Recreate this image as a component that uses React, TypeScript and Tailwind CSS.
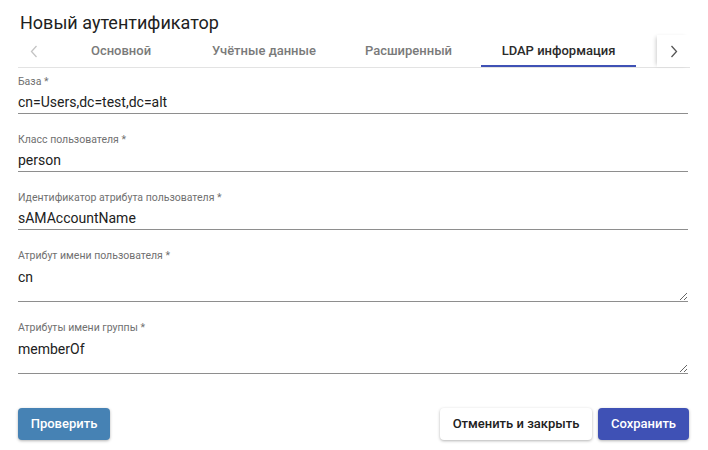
const tabs = [
  { label: "Основной", w: "w-[142px]" },
  { label: "Учётные данные", w: "w-[144px]" },
  { label: "Расширенный", w: "w-[145px]" },
  { label: "LDAP информация", w: "w-[155px]", active: true },
];

function Field({ label, value }: { label: string; value: string }) {
  return (
    <div className="mr-[2px] flex flex-col">
      <span className="text-[10.5px] leading-[14px] text-[#707070]">{label}</span>
      <div className="mt-[3px] border-b border-[#8e8e8e] pb-[1px] text-[14px] leading-[20px] text-[#212121]">
        {value}
      </div>
    </div>
  );
}

function AreaField({ label, value }: { label: string; value: string }) {
  return (
    <div className="mr-[2px] flex flex-col">
      <span className="text-[10.5px] leading-[14px] text-[#707070]">{label}</span>
      <textarea
        readOnly
        defaultValue={value}
        rows={1}
        className="mt-[4px] block h-[35px] w-full border-b border-[#8e8e8e] p-0 text-[14px] leading-[20px] text-[#212121] outline-none"
      />
    </div>
  );
}

export default function App() {
  return (
    <div className="h-[450px] w-[708px] bg-white px-[18px] font-['Roboto','Liberation_Sans',sans-serif]">
      {/* Title */}
      <h1 className="pt-[12px] pl-[2px] text-[18px] leading-[22px] text-[#212121]">
        Новый аутентификатор
      </h1>

      {/* Tabs */}
      <div className="mt-[1px] flex h-[33px] border-b border-[#e3e3e3]">
        <div className="flex w-[32px] items-center justify-center">
          <svg width="8" height="13" viewBox="0 0 8 13">
            <polyline points="6.5,1 1.5,6.5 6.5,12" fill="none" stroke="#c4c4c4" strokeWidth="1.3" />
          </svg>
        </div>
        {tabs.map((t) => (
          <div
            key={t.label}
            className={`relative flex items-center justify-center text-[13px] font-medium ${t.w} ${
              t.active ? "text-[#2b2b2b]" : "text-[#7a7a7a]"
            }`}
          >
            {t.label}
            {t.active && <div className="absolute right-0 bottom-0 left-0 h-[2px] bg-[#3f51b5]" />}
          </div>
        ))}
        <div className="flex-1" />
        <div className="flex w-[33px] items-center justify-center bg-white shadow-[-3px_0_4px_-2px_rgba(0,0,0,0.2)]">
          <svg width="8" height="13" viewBox="0 0 8 13">
            <polyline points="1.5,1 6.5,6.5 1.5,12" fill="none" stroke="#555" strokeWidth="1.3" />
          </svg>
        </div>
      </div>

      {/* Fields */}
      <div className="mt-[7px] flex flex-col gap-[19px]">
        <Field label="База *" value="cn=Users,dc=test,dc=alt" />
        <Field label="Класс пользователя *" value="person" />
        <Field label="Идентификатор атрибута пользователя *" value="sAMAccountName" />
        <AreaField label="Атрибут имени пользователя *" value="cn" />
        <AreaField label="Атрибуты имени группы *" value="memberOf" />
      </div>

      {/* Actions */}
      <div className="mt-[34px] mr-[1px] flex items-center">
        <button className="h-[32px] w-[92px] rounded-[4px] bg-[#4682b4] text-[13px] font-medium text-white shadow-[0_1px_3px_rgba(0,0,0,0.3)]">
          Проверить
        </button>
        <div className="flex-1" />
        <button className="h-[32px] w-[152px] rounded-[4px] bg-white text-[13px] font-medium text-[#212121] shadow-[0_1px_3px_rgba(0,0,0,0.3)]">
          Отменить и закрыть
        </button>
        <button className="ml-[6px] h-[32px] w-[91px] rounded-[4px] bg-[#3f51b5] text-[13px] font-medium text-white shadow-[0_1px_3px_rgba(0,0,0,0.3)]">
          Сохранить
        </button>
      </div>
    </div>
  );
}
